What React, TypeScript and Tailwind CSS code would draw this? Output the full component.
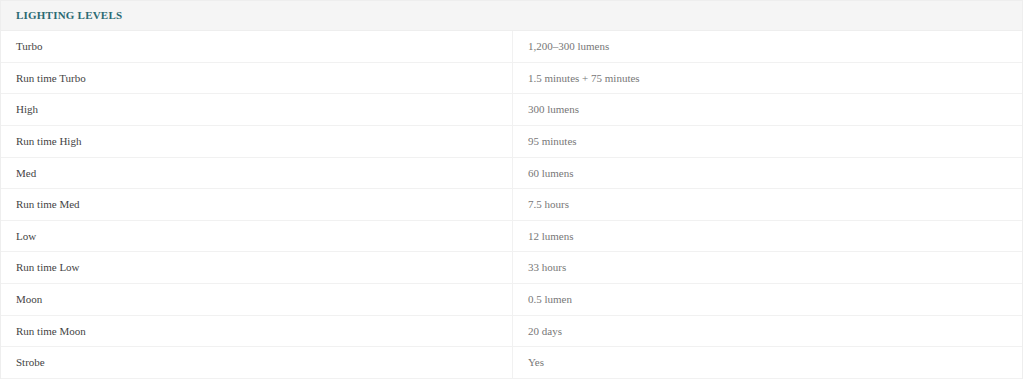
import React from "react";

const rows: [string, string][] = [
  ["Turbo", "1,200–300 lumens"],
  ["Run time Turbo", "1.5 minutes + 75 minutes"],
  ["High", "300 lumens"],
  ["Run time High", "95 minutes"],
  ["Med", "60 lumens"],
  ["Run time Med", "7.5 hours"],
  ["Low", "12 lumens"],
  ["Run time Low", "33 hours"],
  ["Moon", "0.5 lumen"],
  ["Run time Moon", "20 days"],
  ["Strobe", "Yes"],
];

export default function App() {
  return (
    <div className="w-[1024px] h-[379px] bg-white overflow-hidden" style={{ fontFamily: '"Liberation Serif", serif' }}>
      <div className="w-[1023px] border-l border-r border-[#eeeeee]">
        <div className="h-[31px] bg-[#f5f5f5] border-b border-[#eeeeee] flex items-center pl-[15px] border-t">
          <span className="text-[11px] font-bold text-[#2b6a73] tracking-[0.02em] uppercase">Lighting Levels</span>
        </div>
        {rows.map(([k, v], i) => (
          <div key={i} className="h-[31.636px] flex border-b border-[#f1f1f1] text-[11px]">
            <div className="w-[512px] border-r border-[#f1f1f1] flex items-center pl-[15px] text-[#444444]">{k}</div>
            <div className="flex-1 flex items-center pl-[15px] text-[#777777]">{v}</div>
          </div>
        ))}
      </div>
    </div>
  );
}
